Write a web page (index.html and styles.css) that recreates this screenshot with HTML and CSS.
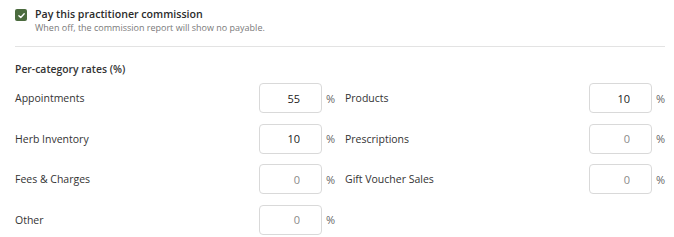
FILE: index.html
```html
<!DOCTYPE html>
<html lang="en">
<head>
  <meta charset="UTF-8" />
  <title>Practitioner commission</title>
  <link rel="stylesheet" href="styles.css">
</head>
<body>
  <div class="panel">
    <label class="pay-toggle">
      <span class="check">
        <svg viewBox="0 0 12 12" width="9" height="9"><path d="M2.5 6.2 L5 8.6 L9.6 3.6" fill="none" stroke="#fff" stroke-width="1.8" stroke-linecap="round" stroke-linejoin="round"/></svg>
      </span>
      <span class="pay-text">
        <span class="pay-title">Pay this practitioner commission</span>
        <span class="pay-hint">When off, the commission report will show no payable.</span>
      </span>
    </label>

    <hr class="divider">

    <h3 class="rates-title">Per-category rates (%)</h3>

    <div class="rates">
      <div class="rate">
        <span class="rate-label">Appointments</span>
        <input class="rate-input" type="text" value="55">
        <span class="pct">%</span>
      </div>
      <div class="rate">
        <span class="rate-label">Products</span>
        <input class="rate-input" type="text" value="10">
        <span class="pct">%</span>
      </div>
      <div class="rate">
        <span class="rate-label">Herb Inventory</span>
        <input class="rate-input" type="text" value="10">
        <span class="pct">%</span>
      </div>
      <div class="rate">
        <span class="rate-label">Prescriptions</span>
        <input class="rate-input" type="text" placeholder="0">
        <span class="pct">%</span>
      </div>
      <div class="rate">
        <span class="rate-label">Fees &amp; Charges</span>
        <input class="rate-input" type="text" placeholder="0">
        <span class="pct">%</span>
      </div>
      <div class="rate">
        <span class="rate-label">Gift Voucher Sales</span>
        <input class="rate-input" type="text" placeholder="0">
        <span class="pct">%</span>
      </div>
      <div class="rate">
        <span class="rate-label">Other</span>
        <input class="rate-input" type="text" placeholder="0">
        <span class="pct">%</span>
      </div>
    </div>
  </div>
</body>
</html>
```

FILE: styles.css
```css
body {
  margin: 0;
  background: #fff;
  font-family: "Open Sans", "Noto Sans", sans-serif;
  color: #333;
}

.panel {
  padding: 6px 9px 0 15px;
}

.pay-toggle {
  display: flex;
  align-items: flex-start;
  gap: 8px;
}
.check {
  width: 12px;
  height: 12px;
  margin-top: 3px;
  border-radius: 2px;
  background: #4b6b3e;
  display: flex;
  align-items: center;
  justify-content: center;
  flex-shrink: 0;
}
.pay-text {
  display: flex;
  flex-direction: column;
}
.pay-title {
  font-size: 10.6px;
  font-weight: 600;
  line-height: 16px;
  color: #2b2b2b;
}
.pay-hint {
  font-size: 9px;
  line-height: 12px;
  color: #7a7a7a;
}

.divider {
  border: 0;
  border-top: 1px solid #e3e3e3;
  margin: 12px 0 0;
}

.rates-title {
  margin: 14px 0 0;
  font-size: 10.4px;
  font-weight: 600;
  line-height: 16px;
  color: #333;
}

.rates {
  display: grid;
  grid-template-columns: 1fr 1fr;
  column-gap: 10px;
  row-gap: 10.5px;
  margin-top: 6px;
}
.rate {
  display: flex;
  align-items: center;
}
.rate-label {
  flex: 1;
  font-size: 10.5px;
  color: #333;
}
.rate-input {
  width: 63px;
  height: 30px;
  box-sizing: border-box;
  border: 1px solid #d9d9d9;
  border-radius: 4px;
  padding: 0 21px 0 6px;
  text-align: right;
  font-family: inherit;
  font-size: 11px;
  color: #222;
  outline: none;
}
.rate-input::placeholder {
  color: #8a8a8a;
}
.pct {
  width: 9px;
  margin-left: 4px;
  font-size: 11px;
  color: #666;
}
```
